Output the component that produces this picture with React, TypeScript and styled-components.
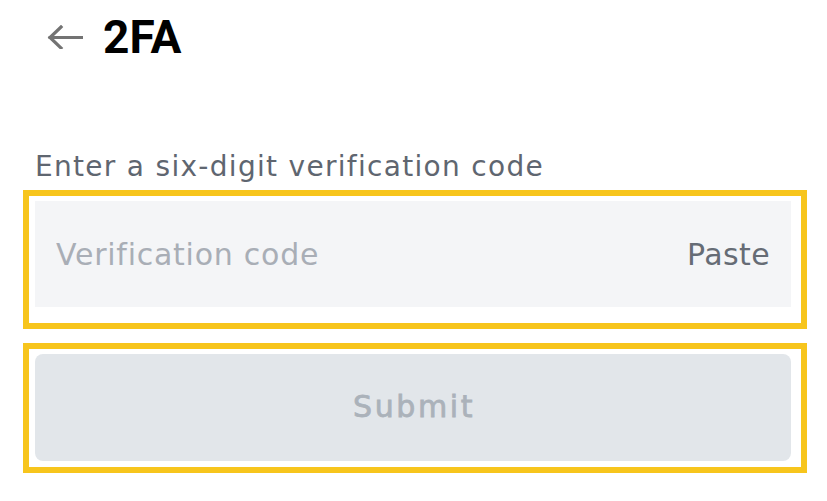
import React from "react";
import styled, { createGlobalStyle } from "styled-components";

const Global = createGlobalStyle`
  html, body { margin: 0; padding: 0; background: #ffffff; }
  body { font-family: "DejaVu Sans", "Open Sans", sans-serif; }
  * { box-sizing: border-box; }
`;

const Page = styled.div`
  width: 827px;
  height: 501px;
  background: #ffffff;
  display: flex;
  flex-direction: column;
`;

const Header = styled.header`
  display: flex;
  align-items: center;
  gap: 20px;
  height: 46px;
  margin: 14px 0 0 47px;
`;

const BackButton = styled.button`
  display: flex;
  align-items: center;
  justify-content: center;
  padding: 0;
  border: none;
  background: transparent;
  width: 36px;
  height: 24px;
  cursor: pointer;
`;

const Title = styled.h1`
  margin: 0;
  font-family: Roboto, "Liberation Sans", sans-serif;
  font-weight: 700;
  font-size: 46px;
  line-height: 46px;
  color: #000000;
`;

const Main = styled.main`
  display: flex;
  flex-direction: column;
  padding: 0 20px 0 23px;
  margin-top: 87px;
`;

const Label = styled.label`
  display: block;
  padding-left: 12px;
  margin-bottom: 3px;
  font-size: 28px;
  line-height: 40px;
  letter-spacing: 1.3px;
  color: #5f6670;
`;

const Highlight = styled.div<{ $top?: number; $bottom: number }>`
  border: 6px solid #f7c51d;
  margin-top: ${(p) => p.$top ?? 0}px;
  padding: 5px 10px ${(p) => p.$bottom}px 6px;
`;

const Field = styled.div`
  display: flex;
  align-items: center;
  justify-content: space-between;
  height: 106px;
  padding: 0 21px 0 21px;
  background: #f4f5f7;
`;

const Input = styled.input`
  flex: 1;
  min-width: 0;
  border: none;
  outline: none;
  background: transparent;
  font-family: "DejaVu Sans", sans-serif;
  font-size: 30px;
  letter-spacing: 0.75px;
  color: #333;
  padding: 0;
  &::placeholder {
    color: #a9aeb6;
  }
`;

const PasteButton = styled.button`
  border: none;
  background: transparent;
  padding: 0;
  font-family: "DejaVu Sans", sans-serif;
  font-size: 30px;
  letter-spacing: 0.4px;
  color: #666c75;
  cursor: pointer;
`;

const SubmitButton = styled.button`
  width: 100%;
  height: 107px;
  border: none;
  border-radius: 8px;
  background: #e2e6ea;
  font-family: "DejaVu Sans", sans-serif;
  font-weight: 400;
  font-size: 30px;
  letter-spacing: 2.6px;
  -webkit-text-stroke: 0.8px #abb2ba;
  color: #abb2ba;
  display: flex;
  align-items: center;
  justify-content: center;
  padding: 0 0 2px 2px;
`;

export default function App() {
  return (
    <Page>
      <Global />
      <Header>
        <BackButton aria-label="Back">
          <svg width="36" height="24" viewBox="0 0 36 24" fill="none">
            <path
              d="M35 12.5H3M14 2L3 12.5L14 23"
              stroke="#737373"
              strokeWidth="3.2"
              strokeLinecap="square"
            />
          </svg>
        </BackButton>
        <Title>2FA</Title>
      </Header>
      <Main>
        <Label>Enter a six-digit verification code</Label>
        <Highlight $bottom={16}>
          <Field>
            <Input placeholder="Verification code" />
            <PasteButton>Paste</PasteButton>
          </Field>
        </Highlight>
        <Highlight $top={14} $bottom={6}>
          <SubmitButton disabled>Submit</SubmitButton>
        </Highlight>
      </Main>
    </Page>
  );
}
